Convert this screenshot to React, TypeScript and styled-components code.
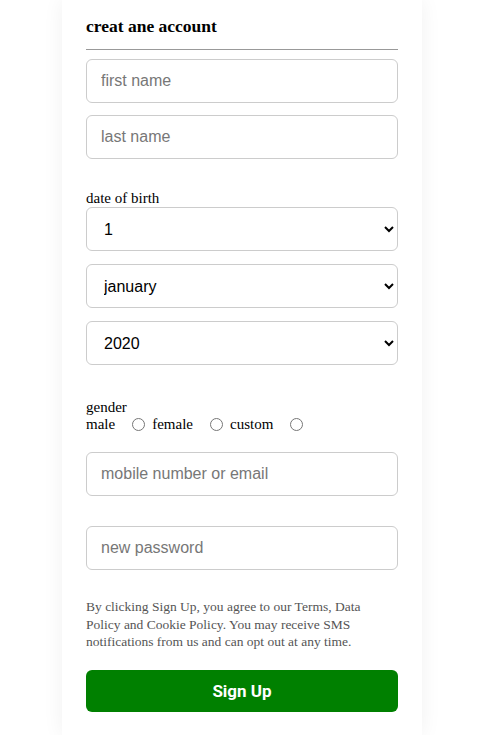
import styled, { createGlobalStyle } from 'styled-components';

const GlobalStyle = createGlobalStyle`
  html, body {
    margin: 0;
    padding: 0;
    background: #fff;
  }
  body {
    font-family: "Liberation Serif", "Times New Roman", serif;
  }
`;

const Page = styled.div`
  display: flex;
  padding-left: 62px;
`;

const Card = styled.form`
  width: 360px;
  box-sizing: border-box;
  padding: 0 24px 24px;
  background: #fff;
  box-shadow: 0 0 20px rgba(0, 0, 0, 0.06);
  display: flex;
  flex-direction: column;
`;

const Title = styled.h3`
  margin: 16px 0 0;
  font-size: 17.5px;
  font-weight: bold;
  color: #000;
  padding-bottom: 12px;
  border-bottom: 1px solid #999;
`;

const TextInput = styled.input<{ gapTop: number }>`
  height: 44px;
  box-sizing: border-box;
  margin-top: ${(p) => p.gapTop}px;
  padding: 0 14px;
  border: 1px solid #ccc;
  border-radius: 6px;
  font-family: "Liberation Sans", Arial, sans-serif;
  font-size: 16px;
  color: #000;
  outline: none;

  &::placeholder {
    color: #777;
  }
`;

const Label = styled.div<{ gapTop: number }>`
  margin-top: ${(p) => p.gapTop}px;
  font-size: 15px;
  line-height: 17px;
  color: #000;
`;

const Select = styled.select<{ gapTop: number }>`
  height: 44px;
  box-sizing: border-box;
  margin-top: ${(p) => p.gapTop}px;
  padding: 0 13px;
  border: 1px solid #ccc;
  border-radius: 6px;
  background: #fff;
  font-family: "Liberation Sans", Arial, sans-serif;
  font-size: 16px;
  color: #000;
  outline: none;
`;

const RadioRow = styled.div`
  display: flex;
  align-items: center;
  font-size: 15px;
  line-height: 17px;
  color: #000;
`;

const RadioLabel = styled.label`
  display: inline-flex;
  align-items: center;
  margin-right: 7px;

  input {
    margin: 0 0 0 17px;
    width: 13px;
    height: 13px;
  }
`;

const Note = styled.p`
  margin: 28px 0 0;
  font-size: 13.5px;
  line-height: 17.5px;
  color: #555;
`;

const Button = styled.button`
  margin-top: 19px;
  height: 42px;
  border: none;
  border-radius: 6px;
  background: #008000;
  color: #fff;
  font-family: Roboto, "Liberation Sans", Arial, sans-serif;
  font-size: 17px;
  font-weight: bold;
  cursor: pointer;
`;

const days = Array.from({ length: 31 }, (_, i) => i + 1);
const months = ['january', 'february', 'march', 'april', 'may', 'june', 'july', 'august', 'september', 'october', 'november', 'december'];
const years = Array.from({ length: 50 }, (_, i) => 2020 - i);

export default function App() {
  return (
    <>
      <GlobalStyle />
      <Page>
        <Card onSubmit={(e) => e.preventDefault()}>
          <Title>creat ane account</Title>
          <TextInput gapTop={9} placeholder="first name" />
          <TextInput gapTop={12} placeholder="last name" />

          <Label gapTop={31}>date of birth</Label>
          <Select gapTop={0} defaultValue="1">
            {days.map((d) => (
              <option key={d} value={d}>{d}</option>
            ))}
          </Select>
          <Select gapTop={13} defaultValue="january">
            {months.map((m) => (
              <option key={m} value={m}>{m}</option>
            ))}
          </Select>
          <Select gapTop={13} defaultValue="2020">
            {years.map((y) => (
              <option key={y} value={y}>{y}</option>
            ))}
          </Select>

          <Label gapTop={34}>gender</Label>
          <RadioRow>
            <RadioLabel>male <input type="radio" name="gender" /></RadioLabel>
            <RadioLabel>female <input type="radio" name="gender" /></RadioLabel>
            <RadioLabel>custom <input type="radio" name="gender" /></RadioLabel>
          </RadioRow>

          <TextInput gapTop={19} placeholder="mobile number or email" />
          <TextInput gapTop={30} type="password" placeholder="new password" />

          <Note>
            By clicking Sign Up, you agree to our Terms, Data Policy and Cookie Policy. You may receive SMS
            notifications from us and can opt out at any time.
          </Note>
          <Button type="submit">Sign Up</Button>
        </Card>
      </Page>
    </>
  );
}
